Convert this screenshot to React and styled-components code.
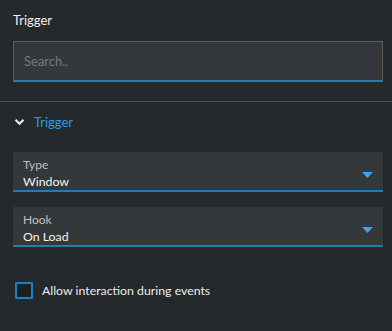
import styled, { createGlobalStyle } from "styled-components";

const GlobalStyle = createGlobalStyle`
  html, body {
    margin: 0;
    padding: 0;
    background: #26292b;
  }
  body {
    font-family: Lato, "Open Sans", "Liberation Sans", sans-serif;
  }
`;

const Panel = styled.div`
  width: 392px;
  height: 331px;
  background: #26292b;
  color: #f0f0f0;
  font-size: 13px;
  overflow: hidden;
`;

const Header = styled.div`
  padding: 12px 9px 0 13px;
`;

const Title = styled.div`
  height: 17px;
  line-height: 17px;
  margin-bottom: 12px;
`;

const SearchBox = styled.input`
  display: block;
  box-sizing: border-box;
  width: 370px;
  height: 41px;
  padding: 0 10px;
  background: #35383b;
  border: 1px solid #625f57;
  border-bottom: 2px solid #1e7fb8;
  color: #eee;
  font: inherit;
  font-size: 13px;
  outline: none;

  &::placeholder {
    color: #76797c;
  }
`;

const Divider = styled.hr`
  margin: 19px 0 0;
  border: 0;
  border-top: 1px solid #56544e;
`;

const Section = styled.div`
  padding: 0 9px 0 13px;
`;

const SectionHeader = styled.div`
  display: flex;
  align-items: center;
  gap: 9px;
  height: 40px;
  padding-left: 1px;
  color: #2d9be3;
`;

const Fields = styled.div`
  display: flex;
  flex-direction: column;
  gap: 15px;
  margin-top: 10px;
`;

const Select = styled.div`
  position: relative;
  box-sizing: border-box;
  width: 370px;
  height: 40px;
  padding: 5px 10px 0;
  background: #35383b;
  border-bottom: 2px solid #1e7fb8;
`;

const Label = styled.div`
  color: #c2bfb7;
  font-size: 12px;
  line-height: 16px;
`;

const Value = styled.div`
  color: #f4f4f4;
  font-size: 12.3px;
  line-height: 17px;
`;

const Arrow = styled.svg`
  position: absolute;
  right: 10px;
  top: 20px;
`;

const CheckRow = styled.label`
  display: flex;
  align-items: center;
  gap: 9px;
  margin-top: 35px;
  padding-left: 2px;
  font-size: 12.3px;
  color: #ececec;
`;

const Box = styled.span`
  box-sizing: border-box;
  width: 18px;
  height: 17px;
  border: 2px solid #1f7fc0;
  background: #1d1f21;
  border-radius: 1px;
`;

function Chevron() {
  return (
    <svg width="11" height="8" viewBox="0 0 11 8">
      <path
        d="M1.5 1.8 L5.5 5.8 L9.5 1.8"
        fill="none"
        stroke="#e8e8e8"
        strokeWidth="2.2"
      />
    </svg>
  );
}

function Dropdown({ label, value }) {
  return (
    <Select>
      <Label>{label}</Label>
      <Value>{value}</Value>
      <Arrow width="11" height="6" viewBox="0 0 11 6">
        <path d="M0 0 H11 L5.5 6 Z" fill="#3aa3ee" />
      </Arrow>
    </Select>
  );
}

export default function App() {
  return (
    <>
      <GlobalStyle />
      <Panel>
        <Header>
          <Title>Trigger</Title>
          <SearchBox placeholder="Search.." readOnly />
        </Header>
        <Divider />
        <Section>
          <SectionHeader>
            <Chevron />
            <span>Trigger</span>
          </SectionHeader>
          <Fields>
            <Dropdown label="Type" value="Window" />
            <Dropdown label="Hook" value="On Load" />
          </Fields>
          <CheckRow>
            <Box />
            <span>Allow interaction during events</span>
          </CheckRow>
        </Section>
      </Panel>
    </>
  );
}
